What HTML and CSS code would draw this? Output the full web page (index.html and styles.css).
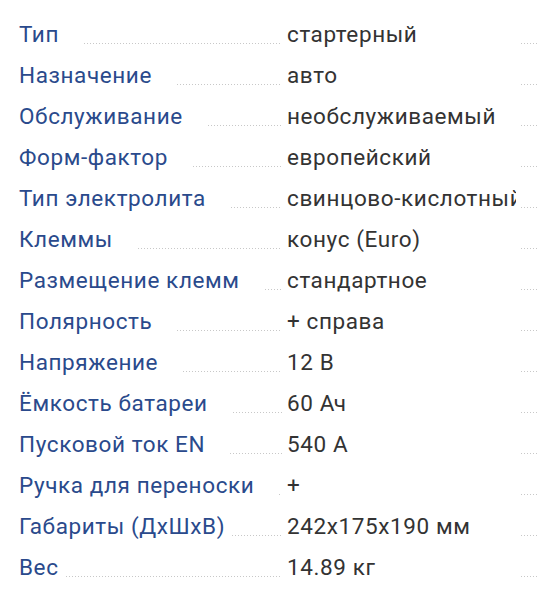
FILE: index.html
```html
<!DOCTYPE html>
<html lang="ru">
<head>
<meta charset="utf-8">
<link rel="stylesheet" href="styles.css">
</head>
<body>
<div class="specs">
  <div class="row"><div class="label"><span class="name">Тип</span><span class="leader"></span></div><div class="value">стартерный</div><span class="leader"></span></div>
  <div class="row"><div class="label"><span class="name">Назначение</span><span class="leader"></span></div><div class="value">авто</div><span class="leader"></span></div>
  <div class="row"><div class="label"><span class="name">Обслуживание</span><span class="leader"></span></div><div class="value">необслуживаемый</div><span class="leader"></span></div>
  <div class="row"><div class="label"><span class="name">Форм-фактор</span><span class="leader"></span></div><div class="value">европейский</div><span class="leader"></span></div>
  <div class="row"><div class="label"><span class="name">Тип электролита</span><span class="leader"></span></div><div class="value">свинцово-кислотный</div><span class="leader"></span></div>
  <div class="row"><div class="label"><span class="name">Клеммы</span><span class="leader"></span></div><div class="value">конус (Euro)</div><span class="leader"></span></div>
  <div class="row"><div class="label"><span class="name">Размещение клемм</span><span class="leader"></span></div><div class="value">стандартное</div><span class="leader"></span></div>
  <div class="row"><div class="label"><span class="name">Полярность</span><span class="leader"></span></div><div class="value">+ справа</div><span class="leader"></span></div>
  <div class="row"><div class="label"><span class="name">Напряжение</span><span class="leader"></span></div><div class="value">12 В</div><span class="leader"></span></div>
  <div class="row"><div class="label"><span class="name">Ёмкость батареи</span><span class="leader"></span></div><div class="value">60 Ач</div><span class="leader"></span></div>
  <div class="row"><div class="label"><span class="name">Пусковой ток EN</span><span class="leader"></span></div><div class="value">540 А</div><span class="leader"></span></div>
  <div class="row"><div class="label"><span class="name">Ручка для переноски</span><span class="leader"></span></div><div class="value">+</div><span class="leader"></span></div>
  <div class="row"><div class="label label--tight"><span class="name">Габариты (ДхШхВ)</span><span class="leader"></span></div><div class="value">242x175x190 мм</div><span class="leader"></span></div>
  <div class="row"><div class="label label--tight"><span class="name">Вес</span><span class="leader"></span></div><div class="value">14.89 кг</div><span class="leader"></span></div>
</div>
</body>
</html>
```

FILE: styles.css
```css
html, body {
  margin: 0;
  padding: 0;
  background: #ffffff;
}

.specs {
  padding: 14px 0 0 19px;
  font-family: Roboto, "Noto Sans", sans-serif;
  font-size: 22.5px;
  letter-spacing: 0.6px;
  line-height: 41px;
}

.row {
  display: grid;
  grid-template-columns: 263px 229px 1fr;
  column-gap: 5px;
  height: 41px;
}

.label {
  display: flex;
  min-width: 0;
  color: #2a4a8c;
}

.name {
  white-space: nowrap;
  flex: none;
}

.leader {
  flex: 1;
  min-width: 0;
  margin-left: 25px;
  background-image: linear-gradient(to right, #c8c8c8 0 1px, transparent 1px);
  background-size: 3px 1px;
  background-repeat: repeat-x;
  background-position: 0 29px;
}

.label--tight .leader {
  margin-left: 7px;
}

.row > .leader {
  margin-left: 0;
}

.value {
  color: #333333;
  white-space: nowrap;
  overflow: hidden;
}
```
